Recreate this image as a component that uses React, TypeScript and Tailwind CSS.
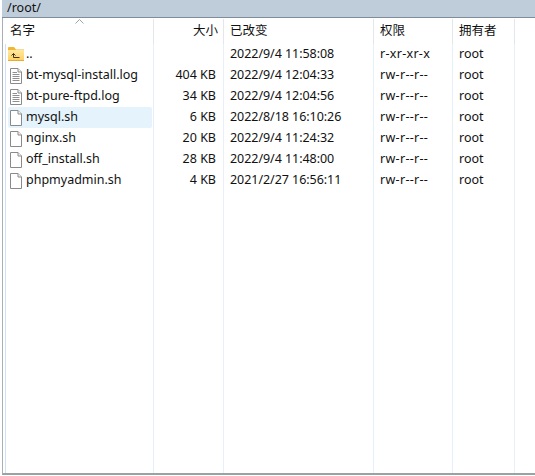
import { ReactNode } from "react";

const files = [
  { name: "..", size: "", date: "2022/9/4 11:58:08", perm: "r-xr-xr-x", icon: "up" },
  { name: "bt-mysql-install.log", size: "404 KB", date: "2022/9/4 12:04:33", perm: "rw-r--r--", icon: "log" },
  { name: "bt-pure-ftpd.log", size: "34 KB", date: "2022/9/4 12:04:56", perm: "rw-r--r--", icon: "log" },
  { name: "mysql.sh", size: "6 KB", date: "2022/8/18 16:10:26", perm: "rw-r--r--", icon: "file", selected: true },
  { name: "nginx.sh", size: "20 KB", date: "2022/9/4 11:24:32", perm: "rw-r--r--", icon: "file" },
  { name: "off_install.sh", size: "28 KB", date: "2022/9/4 11:48:00", perm: "rw-r--r--", icon: "file" },
  { name: "phpmyadmin.sh", size: "4 KB", date: "2021/2/27 16:56:11", perm: "rw-r--r--", icon: "file" },
];

function FileIcon({ kind }: { kind: string }) {
  if (kind === "up") {
    return (
      <svg width="16" height="16" viewBox="0 0 16 16">
        <defs>
          <linearGradient id="folder" x1="0" y1="0" x2="0" y2="1">
            <stop offset="0" stopColor="#ffe9a0" />
            <stop offset="1" stopColor="#fdd064" />
          </linearGradient>
        </defs>
        <path d="M0 4 V1 Q0 0 1 0 H6 L8 2.5 H16 V5 H0 Z" fill="#f2b632" />
        <rect x="0" y="3" width="16" height="10.5" rx="0.5" fill="url(#folder)" />
        <path d="M0 13.5 H16" stroke="#e8ab34" />
        <path d="M5.5 6.5 V10.5 H11.5 M3.5 8.5 L5.5 6.5 L7.5 8.5" fill="none" stroke="#3f3410" />
      </svg>
    );
  }
  return (
    <svg width="16" height="16" viewBox="0 0 16 16">
      <path d="M2.5 0.5 H10 L13.5 4 V15.5 H2.5 Z" fill="#fff" stroke="#8a8a8a" />
      <path d="M10 0.5 V4 H13.5" fill="#f4f4f4" stroke="#8a8a8a" />
      {kind === "log" && (
        <path d="M4.5 4.5 H9 M4.5 6.5 H11.5 M4.5 8.5 H11.5 M4.5 10.5 H11.5 M4.5 12.5 H11.5" stroke="#8f8f8f" />
      )}
    </svg>
  );
}

function Cell({ className, children }: { className: string; children?: ReactNode }) {
  return <div className={`flex shrink-0 items-center border-r border-[#e6effb] ${className}`}>{children}</div>;
}

function HeadCell({ className, children }: { className: string; children?: ReactNode }) {
  return <div className={`flex shrink-0 items-center border-r border-[#e3e6ea] ${className}`}>{children}</div>;
}

export default function App() {
  return (
    <div className="flex h-[476px] w-[535px] flex-col overflow-hidden bg-white pb-[1px] pl-[2px] text-[12.5px] text-[#111] [font-family:'Noto_Sans','Noto_Sans_CJK_SC',sans-serif]">
      <div className="flex h-[18px] shrink-0 items-center border-b border-[#7f8c99] bg-[#bfcddb] pl-[5px] leading-none">/root/</div>
      <div className="flex min-h-0 flex-1 flex-col border-b-2 border-l border-[#9aa3a3] border-l-[#a9b0b5]">
        <div className="relative flex h-[26px] shrink-0 pt-[1px]">
          <HeadCell className="w-[151px] pl-[7px]">名字</HeadCell>
          <HeadCell className="w-[70px] justify-end pr-[5px]">大小</HeadCell>
          <HeadCell className="w-[150px] pl-[6px]">已改变</HeadCell>
          <HeadCell className="w-[79px] pl-[6px]">权限</HeadCell>
          <HeadCell className="w-[62px] pl-[6px]">拥有者</HeadCell>
          <svg className="absolute left-[72px] top-[1px]" width="9" height="5" viewBox="0 0 9 5">
            <path d="M0.5 4.5 L4.5 0.5 L8.5 4.5" fill="none" stroke="#9aa3ad" />
          </svg>
        </div>
        <div className="flex min-h-0 flex-1">
          <div className="w-[3px] shrink-0 border-r border-[#cfe0f7]" />
          <div className="flex min-w-0 flex-1 flex-col">
            {files.map((f) => (
              <div key={f.name} className="flex h-[21px] shrink-0">
                <Cell className="w-[148px] pl-[2px]">
                  <div className={`flex h-[21px] w-[144px] items-center gap-[2px] rounded-[2px] ${f.selected ? "bg-[#e5f3fd]" : ""}`}>
                    <FileIcon kind={f.icon} />
                    <span className="whitespace-nowrap">{f.name}</span>
                  </div>
                </Cell>
                <Cell className="w-[70px] justify-end pr-[7px]">{f.size}</Cell>
                <Cell className="w-[150px] pl-[6px] tracking-[-0.05px]">{f.date}</Cell>
                <Cell className="w-[79px] pl-[6px] tracking-[0.3px]">{f.perm}</Cell>
                <Cell className="w-[62px] pl-[6px]">root</Cell>
              </div>
            ))}
            <div className="flex min-h-0 flex-1">
              <Cell className="w-[148px]" />
              <Cell className="w-[70px]" />
              <Cell className="w-[150px]" />
              <Cell className="w-[79px]" />
              <Cell className="w-[62px]" />
            </div>
          </div>
        </div>
      </div>
    </div>
  );
}
